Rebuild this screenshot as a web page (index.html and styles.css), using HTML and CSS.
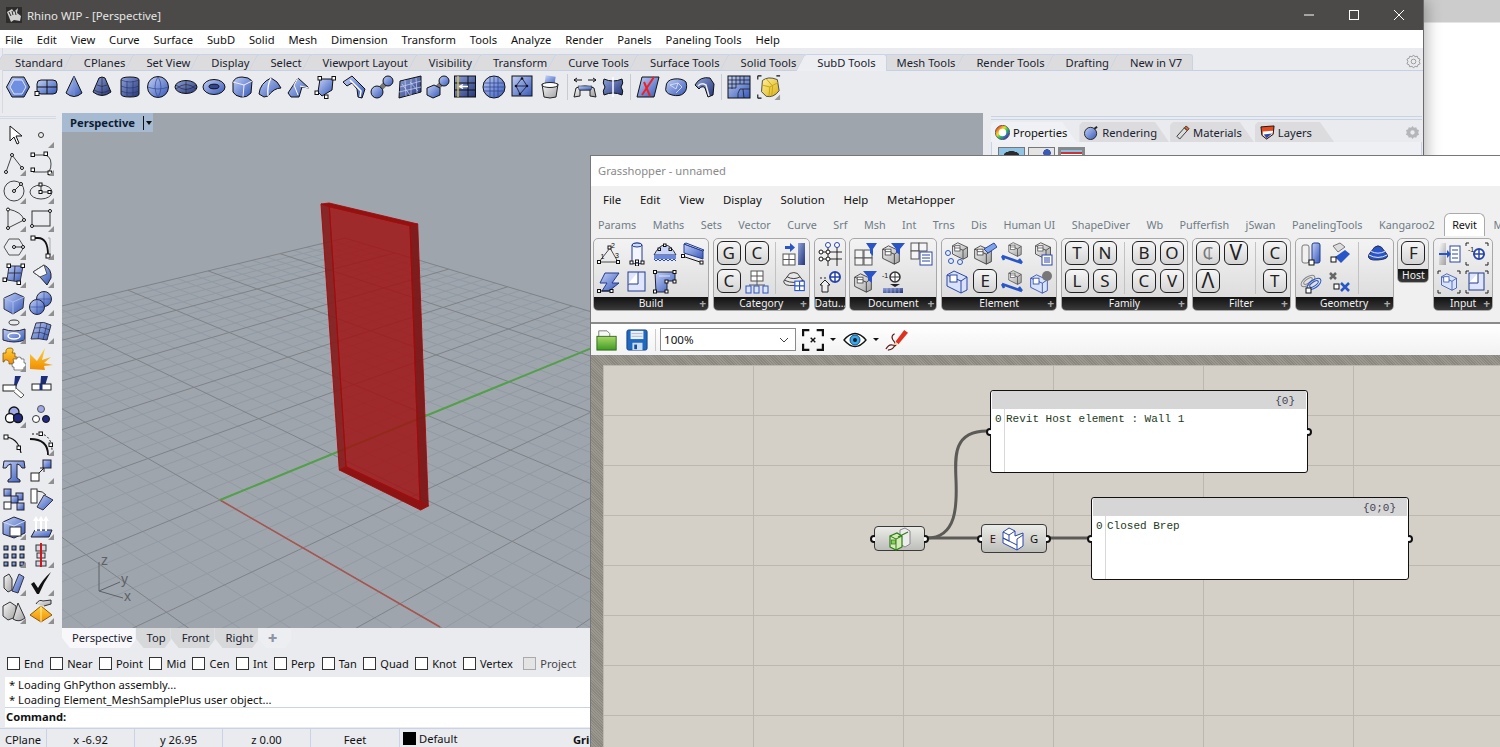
FILE: index.html
```html
<!DOCTYPE html>
<html lang="en">
<head>
    <meta charset="UTF-8">
    <title>Rhino WIP - [Perspective]</title>
    <link rel="stylesheet" href="styles.css">
</head>
<body>
    <svg class="defs" width="0" height="0">
        <defs>
            <linearGradient id="b" x1="0" y1="0" x2="1" y2="1"><stop offset="0" stop-color="#c3d0f7"/><stop offset="1" stop-color="#3558b8"/></linearGradient>
            <linearGradient id="d" x1="0" y1="0" x2="1" y2="1"><stop offset="0" stop-color="#8fa2da"/><stop offset="1" stop-color="#24357a"/></linearGradient>
            <linearGradient id="g" x1="0" y1="0" x2="1" y2="1"><stop offset="0" stop-color="#fafafa"/><stop offset="1" stop-color="#a0a0a0"/></linearGradient>
            <linearGradient id="o" x1="0" y1="0" x2="0" y2="1"><stop offset="0" stop-color="#ffd23c"/><stop offset="1" stop-color="#ef8c00"/></linearGradient>
            <linearGradient id="y" x1="0" y1="0" x2="1" y2="1"><stop offset="0" stop-color="#fff3a0"/><stop offset="1" stop-color="#d8b010"/></linearGradient>
            <linearGradient id="gr" x1="0" y1="0" x2="0" y2="1"><stop offset="0" stop-color="#a9d86a"/><stop offset="1" stop-color="#3f9a22"/></linearGradient>

            <!-- rhino main toolbar -->
            <symbol id="hex" viewBox="0 0 24 24"><path d="M6 2H18L23.5 12 18 22H6L.5 12Z" fill="url(#b)" stroke="#111"/><path d="M8 5H16L20 12 16 19H8L4 12Z" fill="#6f8fe0" stroke="#dfe6fb"/></symbol>
            <symbol id="plane" viewBox="0 0 24 24"><rect x="3" y="5" width="20" height="14" rx="4" fill="url(#b)" stroke="#111"/><path d="M3 12H23M13 5V19" stroke="#111" fill="none"/><rect x="1" y="16.500" width="4" height="4" fill="#fff" stroke="#111"/></symbol>
            <symbol id="cone" viewBox="0 0 24 24"><path d="M12 1 20 18Q12 25 4 18Z" fill="url(#b)" stroke="#111"/><path d="M12 1V21" stroke="#7890d8" fill="none"/></symbol>
            <symbol id="para" viewBox="0 0 24 24"><path d="M9 3Q12 1 15 3L21 17Q12 24 3 17Z" fill="url(#d)" stroke="#111"/><path d="M7 10Q12 13 17 10M4 15Q12 20 20 15M12 2V21" stroke="#222" fill="none" stroke-width=".6"/></symbol>
            <symbol id="cyl" viewBox="0 0 24 24"><path d="M3 5Q3 2 12 2T21 5V19Q21 22 12 22T3 19Z" fill="url(#d)" stroke="#111"/><path d="M3 5Q12 9 21 5M3 11Q12 15 21 11M3 16Q12 20 21 16M9 6V21M15 6V21" stroke="#23316a" fill="none" stroke-width=".6"/></symbol>
            <symbol id="sph" viewBox="0 0 24 24"><circle cx="12" cy="12" r="10.500" fill="url(#b)" stroke="#111"/><path d="M1.500 12Q12 16 22.500 12M12 1.500Q6 12 12 22.500Q18 12 12 1.500" stroke="#33498f" fill="none" stroke-width=".7"/></symbol>
            <symbol id="ell" viewBox="0 0 24 24"><ellipse cx="12" cy="12" rx="11" ry="6.500" fill="url(#d)" stroke="#111"/><path d="M2 10Q12 19 22 10M2 14Q12 5 22 14M12 6V18" stroke="#222" fill="none" stroke-width=".6"/></symbol>
            <symbol id="tor" viewBox="0 0 24 24"><ellipse cx="12" cy="12" rx="11" ry="7.500" fill="url(#b)" stroke="#111"/><ellipse cx="12" cy="11.500" rx="5" ry="2.300" fill="#33458d" stroke="#111"/></symbol>
            <symbol id="cub" viewBox="0 0 24 24"><path d="M3 7Q5 2 12 2T22 6L21 18Q17 23 11 22T3 17Z" fill="url(#b)" stroke="#111"/><path d="M3 7 14 10 22 6M14 10 13 22" stroke="#eef" fill="none"/></symbol>
            <symbol id="cor1" viewBox="0 0 24 24"><path d="M1 19Q2 8 13 3Q20 6 23 13Q16 13 10 21L6 22Z" fill="url(#b)" stroke="#111"/><path d="M13 3Q9 10 10 21" stroke="#fff" fill="none" stroke-width="1.300"/></symbol>
            <symbol id="cor2" viewBox="0 0 24 24"><path d="M2 18 12 3 23 13 16 12 13 22 5 22Z" fill="url(#b)" stroke="#111"/><path d="M12 3 8 10 12 20M23 13 14 11" stroke="#fff" fill="none"/></symbol>
            <symbol id="cor3" viewBox="0 0 24 24"><path d="M6 4H19L18 15 8 21 4 17Z" fill="url(#b)" stroke="#111"/><g fill="#fff" stroke="#111"><rect x="4" y="1.500" width="3.500" height="3.500"/><rect x="18" y="1.500" width="3.500" height="3.500"/><rect x="1" y="16" width="3.500" height="3.500"/><rect x="10.500" y="20" width="3.500" height="3.500"/></g></symbol>
            <symbol id="swp" viewBox="0 0 24 24"><path d="M1 7 10 1 23 14 20 23 16 22 15 14 10 8 5 11Z" fill="url(#b)" stroke="#111"/><path d="M8 5 19 16 18 22" stroke="#fff" fill="none" stroke-width="1.500"/></symbol>
            <symbol id="ball" viewBox="0 0 24 24"><path d="M8 16 16 8" stroke="#777" stroke-width="5"/><circle cx="18" cy="6" r="5" fill="url(#b)" stroke="#111"/><circle cx="7" cy="17" r="6" fill="url(#b)" stroke="#111"/></symbol>
            <symbol id="tile" viewBox="0 0 24 24"><path d="M2 6 23 1V17L1 23Z" fill="url(#d)" stroke="#111"/><path d="M7 5 8 21M13 4 13 20M18 3 19 18M2 12 23 6M1 17 23 12M4 9 12 20M12 7 20 16" stroke="#ccd6f4" fill="none" stroke-width=".7"/></symbol>
            <symbol id="boxb" viewBox="0 0 24 24"><path d="M9 15 16 8" stroke="#777" stroke-width="5"/><circle cx="18" cy="6" r="5" fill="url(#b)" stroke="#111"/><path d="M1 13 8 10 14 13V20L7 23 1 20Z" fill="url(#b)" stroke="#111"/></symbol>
            <symbol id="spl" viewBox="0 0 24 24"><rect x=".5" y="1" width="21" height="21" fill="url(#d)" stroke="#111"/><path d="M.5 8H21.500M.5 15H21.500M14 1V22" stroke="#111" fill="none"/><path d="M4 1V22" stroke="#f5d020" stroke-width="1.300"/><path d="M5 11.500H14M5 11.500 9 9.500M5 11.500 9 13.500" stroke="#fff" stroke-width="1.300" fill="none"/></symbol>
            <symbol id="gsph" viewBox="0 0 24 24"><circle cx="12" cy="12" r="11" fill="url(#b)" stroke="#111"/><path d="M1 8H23M1 12H23M1 16H23M8 1V23M12 1V23M16 1V23" stroke="#2b3f88" fill="none" stroke-width=".7"/></symbol>
            <symbol id="net" viewBox="0 0 24 24"><rect x="2" y="1" width="20" height="20" fill="url(#b)" stroke="#111"/><path d="M12 3 6 11 10 19M12 3 17 11 10 19M6 11H17" stroke="#112" fill="none" stroke-width=".8"/><g fill="#112"><circle cx="12" cy="3.500" r="1.300"/><circle cx="6" cy="11" r="1.300"/><circle cx="17" cy="11" r="1.300"/><circle cx="10" cy="19" r="1.300"/></g></symbol>
            <symbol id="buck" viewBox="0 0 24 24"><rect x="7" y="1" width="10" height="11" fill="url(#b)" transform="rotate(8 12 6)"/><path d="M4 9H20L18 22Q12 24 6 22Z" fill="url(#g)" stroke="#222"/><ellipse cx="12" cy="10" rx="8" ry="2.500" fill="#fff" stroke="#222"/></symbol>
            <symbol id="brg" viewBox="0 0 24 24"><path d="M1 5H9M1 5 4 3M1 5 4 7M23 5H15M23 5 20 3M23 5 20 7" stroke="#111" fill="none"/><path d="M3 13Q12 9 21 13L23 22 17 21 17 15H7L7 21 1 22Z" fill="url(#g)" stroke="#222"/><path d="M5 11H19L18 15H6Z" fill="url(#b)" stroke="#111" stroke-width=".5"/></symbol>
            <symbol id="pin" viewBox="0 0 24 24"><path d="M3 4Q12 8 21 4Q23 8 20 12Q23 16 21 20Q12 16 3 20Q1 16 4 12Q1 8 3 4Z" fill="url(#d)" stroke="#111"/><path d="M12 2V22" stroke="#fff" stroke-width="1.500"/></symbol>
            <symbol id="xs" viewBox="0 0 24 24"><path d="M6 2H23L18 22H1Z" fill="url(#b)" stroke="#111"/><path d="M6 20 18 2M8 7 14 21" stroke="#f02020" stroke-width="2" fill="none"/></symbol>
            <symbol id="pol" viewBox="0 0 24 24"><path d="M2 12Q2 5 10 4T22 7Q24 14 20 18T8 20 2 12Z" fill="url(#b)" stroke="#111"/><path d="M6 10 14 8 18 12 12 18M14 8 12 14 6 10" stroke="#dfe6fb" fill="none" stroke-width=".8"/></symbol>
            <symbol id="wrp" viewBox="0 0 24 24"><path d="M3 10Q8 1 18 3L22 9 21 20 16 22 13 13Q10 10 7 14Z" fill="url(#d)" stroke="#111"/><path d="M6 11Q9 7 14 10L17 21" stroke="#eee" fill="none" stroke-width="1.500"/></symbol>
            <symbol id="mgr" viewBox="0 0 24 24"><rect x="1" y="1" width="22" height="22" fill="url(#b)" stroke="#111"/><path d="M1 5H23M1 9H23M1 13H9M5 1V14M9 1V13M13 1V9M17 1V9M13 14Q10 18 11 23M16 14 23 14M16 14 17 23M13 14 16 14" stroke="#111" fill="none" stroke-width=".7"/></symbol>
            <symbol id="ycub" viewBox="0 0 28 28"><path d="M8 7Q14 2 24 6L26 18Q20 26 12 24L7 19Z" fill="url(#y)" stroke="#444"/><path d="M8 12 16 14 25 9M16 14 15 24M12 5 19 13 18 24" stroke="#c8a010" fill="none"/><path d="M2 2H6M2 2V6M26 2H22M2 26H6M2 26V22" stroke="#111" fill="none" stroke-width="1.200" transform="translate(1 0)"/><path d="M27 28H21L27 22Z" fill="#999"/></symbol>

            <!-- gears -->
            <symbol id="gear" viewBox="0 0 16 16"><path d="M8 1 9.500 3 12 2.300 12.700 4.500 15 5.500 14 8 15 10.500 12.700 11.500 12 13.700 9.500 13 8 15 6.500 13 4 13.700 3.300 11.500 1 10.500 2 8 1 5.500 3.300 4.500 4 2.300 6.500 3Z" fill="none" stroke="#999"/><circle cx="8" cy="8" r="2.500" fill="none" stroke="#999"/></symbol>
            <symbol id="gearf" viewBox="0 0 16 16"><path d="M8 1 9.500 3 12 2.300 12.700 4.500 15 5.500 14 8 15 10.500 12.700 11.500 12 13.700 9.500 13 8 15 6.500 13 4 13.700 3.300 11.500 1 10.500 2 8 1 5.500 3.300 4.500 4 2.300 6.500 3Z" fill="#b4b6b9"/><circle cx="8" cy="8" r="2.300" fill="#e9ebef"/></symbol>

            <!-- rhino side toolbar -->
            <symbol id="arr" viewBox="0 0 24 24"><path d="M8 3V18L12 14 15 21 17 20 14 13H20Z" fill="#fff" stroke="#111"/></symbol>
            <symbol id="pt" viewBox="0 0 24 24"><circle cx="12" cy="12" r="2.500" fill="#eee" stroke="#333"/></symbol>
            <symbol id="pl" viewBox="0 0 24 24"><path d="M4 21 10 4 20 17" fill="none" stroke="#444"/><g fill="#fff" stroke="#111"><circle cx="4" cy="21" r="1.500"/><circle cx="10" cy="4" r="1.500"/><circle cx="20" cy="17" r="1.500"/></g></symbol>
            <symbol id="cv" viewBox="0 0 24 24"><path d="M4 4H14Q22 4 22 13T16 21H4" fill="none" stroke="#444"/><g fill="#fff" stroke="#111"><rect x="2" y="2" width="3.500" height="3.500"/><rect x="15" y="1" width="3.500" height="3.500"/><rect x="2" y="17" width="3.500" height="3.500"/><rect x="19" y="20" width="3.500" height="3.500"/></g></symbol>
            <symbol id="cir" viewBox="0 0 24 24"><circle cx="12" cy="12" r="10" fill="none" stroke="#444"/><path d="M12 12 19 5" stroke="#333"/><circle cx="12" cy="12" r="1.500" fill="#fff" stroke="#111"/><circle cx="19" cy="5" r="1.500" fill="#fff" stroke="#111"/></symbol>
            <symbol id="elp" viewBox="0 0 24 24"><ellipse cx="12" cy="13" rx="11" ry="7" fill="none" stroke="#444"/><path d="M12 5V13H20" stroke="#333" fill="none"/><g fill="#fff" stroke="#111"><rect x="10" y="4" width="3" height="3"/><rect x="10" y="11.500" width="3" height="3"/><rect x="19" y="11.500" width="3" height="3"/></g></symbol>
            <symbol id="arc" viewBox="0 0 24 24"><path d="M6 2V21L22 13Q20 5 6 2" fill="none" stroke="#444"/><g fill="#fff" stroke="#111"><circle cx="6" cy="2.500" r="1.500"/><circle cx="6" cy="21" r="1.500"/><circle cx="22" cy="13" r="1.500"/></g></symbol>
            <symbol id="rct" viewBox="0 0 24 24"><rect x="3" y="4" width="18" height="15" fill="none" stroke="#333"/><circle cx="21" cy="4" r="1.500" fill="#fff" stroke="#111"/><circle cx="3" cy="19" r="1.500" fill="#fff" stroke="#111"/></symbol>
            <symbol id="pg" viewBox="0 0 24 24"><path d="M7 4H17L22 12 17 20H7L2 12Z" fill="none" stroke="#555"/><path d="M12 12H22" stroke="#333"/><circle cx="12" cy="12" r="1.500" fill="#fff" stroke="#111"/><circle cx="21" cy="12" r="1.500" fill="#fff" stroke="#111"/></symbol>
            <symbol id="fil" viewBox="0 0 24 24"><path d="M19 3H21V20" fill="none" stroke="#aaa"/><path d="M4 3H9Q19 3 19 20" fill="none" stroke="#111" stroke-width="1.800"/><rect x="2" y="1" width="4" height="4" fill="#fff" stroke="#111"/><rect x="17" y="19" width="4" height="4" fill="#fff" stroke="#111"/></symbol>
            <symbol id="srf" viewBox="0 0 24 24"><path d="M7 3H21L18 19 5 17Z" fill="url(#b)" stroke="#334"/><path d="M6 10H19M13 3 12 18" stroke="#334" fill="none"/><g fill="#fff" stroke="#111"><rect x="5" y="1" width="3.500" height="3.500"/><rect x="19" y="1" width="3.500" height="3.500"/><rect x="1" y="15" width="3.500" height="3.500"/><rect x="15" y="18" width="3.500" height="3.500"/></g></symbol>
            <symbol id="swp2" viewBox="0 0 24 24"><path d="M4 9 15 2Q23 6 22 15L18 22 11 14Z" fill="url(#b)" stroke="#222"/><path d="M4 9 15 2 18 11 11 14Z" fill="#f5f6fa" stroke="#555"/></symbol>
            <symbol id="bx" viewBox="0 0 24 24"><path d="M2 7 13 2 22 6 21 17 11 23 2 18Z" fill="url(#b)" stroke="#334"/><path d="M2 7 11 11 22 6M11 11V23" stroke="#a8baee" fill="none"/></symbol>
            <symbol id="sps" viewBox="0 0 24 24"><g fill="url(#b)" stroke="#223"><circle cx="15" cy="8" r="7.500"/><circle cx="8" cy="16" r="7.500"/></g><path d="M7.500 8H22.500M15 .5V15M.5 16H15M8 8.500V23" stroke="#334a98" fill="none" stroke-width=".6"/></symbol>
            <symbol id="ring" viewBox="0 0 24 24"><ellipse cx="12" cy="3.500" rx="5" ry="2.500" fill="none" stroke="#333"/><path d="M1 10Q12 14 23 10V21Q12 25 1 21Z" fill="url(#b)" stroke="#223"/><ellipse cx="12" cy="17" rx="6" ry="3" fill="none" stroke="#fff" stroke-width="1.500"/></symbol>
            <symbol id="ms" viewBox="0 0 24 24"><path d="M7 4Q15 2 22 6L18 21Q10 19 2 20Z" fill="url(#b)" stroke="#334"/><path d="M6 9Q14 7 21 11M4 14Q12 12 19 16M12 3 9 20M18 5 14 21" stroke="#223" fill="none" stroke-width=".6"/></symbol>
            <symbol id="puz" viewBox="0 0 24 24"><path d="M2 8H5Q4 3 9 3T11 8H14V12Q17 11 17 15T14 17V19H8Q9 16 6 15T3 17H2Z" fill="url(#o)" stroke="#7a4a00" stroke-width=".7" transform="translate(-1 -2)"/><path d="M11 12H15Q14 10 17 10T19 12H22V16Q24 15 24 18T22 20V23H12V20Q10 21 10 18T12 16Z" fill="#fff" stroke="#555" stroke-width=".7"/></symbol>
            <symbol id="exp" viewBox="0 0 24 24"><path d="M1 22V7L8 14 16 1 13 13 22 10 15 16 24 18 15 19 16 23Z" fill="url(#o)"/></symbol>
            <symbol id="trm" viewBox="0 0 24 24"><path d="M13 1H19L14 12 12 11Z" fill="#1c2e7a"/><rect x="2" y="7" width="13" height="6" fill="#fff" stroke="#222" transform="translate(-1 3)"/><path d="M14 13 22 20 19 23 12 17" fill="#fff" stroke="#555"/></symbol>
            <symbol id="spt" viewBox="0 0 24 24"><path d="M12 1H19L15 14H11Z" fill="#1c2e7a"/><rect x="3" y="9" width="19" height="6" fill="#fff" stroke="#222"/><path d="M12 9V15" stroke="#1c2e7a" stroke-width="3"/></symbol>
            <symbol id="bln" viewBox="0 0 24 24"><g stroke="#111" stroke-width="1.300"><circle cx="12" cy="9" r="5" fill="#9fa9e8"/><circle cx="8" cy="15" r="4.500" fill="#fff"/><circle cx="16" cy="15" r="4.500" fill="#1f2a80"/></g></symbol>
            <symbol id="grp" viewBox="0 0 24 24"><circle cx="12" cy="6" r="3.500" fill="#9fa9e8" stroke="#555"/><circle cx="7" cy="16" r="3.500" fill="#fff" stroke="#333"/><circle cx="17" cy="16" r="3.500" fill="#1f2a80" stroke="#111"/></symbol>
            <symbol id="fl1" viewBox="0 0 24 24"><path d="M2 6Q16 6 19 22" fill="none" stroke="#111" stroke-width="1.200"/><rect x="2" y="4" width="4" height="4" fill="#fff" stroke="#111"/><rect x="15" y="15" width="3.500" height="3.500" fill="#fff" stroke="#111"/></symbol>
            <symbol id="off" viewBox="0 0 24 24"><path d="M1 8Q19 8 19 24" fill="none" stroke="#111" stroke-width="1.800"/><path d="M3 3H13Q23 6 23 20" fill="none" stroke="#111" stroke-dasharray="2 2"/><rect x="10" y="1" width="3.500" height="3.500" fill="#fff" stroke="#111"/><rect x="20" y="12" width="3.500" height="3.500" fill="#fff" stroke="#111"/></symbol>
            <symbol id="tt" viewBox="0 0 24 24"><path d="M2 2H22L23 9H20Q18 5 15 5L15 19 18 21V23H6V21L9 19V5Q6 5 4 9H1Z" fill="url(#b)" stroke="#223"/></symbol>
            <symbol id="mv" viewBox="0 0 24 24"><rect x="14" y="1" width="8" height="8" fill="url(#b)" stroke="#223"/><rect x="2" y="14" width="8" height="8" fill="#fff" stroke="#222"/><path d="M10 14 15 9M11 9H15V13" stroke="#222" fill="none"/></symbol>
            <symbol id="blk" viewBox="0 0 24 24"><g stroke="#223"><rect x="2" y="2" width="7" height="7" fill="url(#b)"/><rect x="14" y="6" width="7" height="7" fill="url(#b)"/><rect x="9" y="9" width="7" height="7" fill="url(#b)"/><rect x="2" y="15" width="7" height="7" fill="#fff"/><rect x="15" y="16" width="7" height="7" fill="url(#b)"/></g></symbol>
            <symbol id="rot" viewBox="0 0 24 24"><rect x="2" y="2" width="6" height="14" fill="#fff" stroke="#333"/><path d="M8 4Q14 4 17 8" fill="none" stroke="#333"/><path d="M15 8 24 13 14 23 8 20Z" fill="url(#b)" stroke="#334"/></symbol>
            <symbol id="hol" viewBox="0 0 24 24"><path d="M1 7 12 2 23 6V18L12 23 1 19Z" fill="url(#b)" stroke="#223"/><rect x="8" y="12" width="11" height="9" fill="#fff" stroke="#333"/><path d="M1 7 12 11 23 6" stroke="#cdd8f7" fill="none"/></symbol>
            <symbol id="upa" viewBox="0 0 24 24"><path d="M2 22 6 15H23L20 22Z" fill="url(#b)" stroke="#223"/><path d="M7 16V4M12 16V4M17 16V4" stroke="#fff" stroke-width="2"/><path d="M4 6 7 1 10 6M9 6 12 1 15 6M14 6 17 1 20 6" fill="#fff"/></symbol>
            <symbol id="dots" viewBox="0 0 24 24"><g fill="url(#b)" stroke="#111"><rect x="2" y="3" width="4" height="4"/><rect x="10" y="3" width="4" height="4"/><rect x="18" y="3" width="4" height="4"/><rect x="2" y="11" width="4" height="4"/><rect x="10" y="11" width="4" height="4"/><rect x="18" y="11" width="4" height="4"/><rect x="2" y="19" width="4" height="4"/><rect x="10" y="19" width="4" height="4"/><rect x="18" y="19" width="4" height="4"/></g></symbol>
            <symbol id="mir" viewBox="0 0 24 24"><g fill="#d4d8e6" stroke="#333"><rect x="7" y="2" width="10" height="6"/><rect x="8" y="10" width="8" height="5"/><rect x="7" y="18" width="10" height="5"/></g><path d="M12 0V24" stroke="#d01818" stroke-width="2"/></symbol>
            <symbol id="shl" viewBox="0 0 24 24"><path d="M2 6 7 3 10 8V19L6 21 2 17Z" fill="url(#g)" stroke="#333"/><path d="M10 20 17 3 22 6 16 22Z" fill="url(#b)" stroke="#334"/></symbol>
            <symbol id="chk" viewBox="0 0 24 24"><path d="M2 13 5 11 9 17Q14 8 22 1Q15 11 10 23H8Z" fill="#111"/></symbol>
            <symbol id="shp" viewBox="0 0 24 24"><path d="M1 7 8 3 14 7 14 18 6 21 1 17Z" fill="url(#g)" stroke="#333"/><path d="M16 4 23 19Q17 24 11 20Z" fill="url(#g)" stroke="#333"/></symbol>
            <symbol id="pyr" viewBox="0 0 24 24"><path d="M12 7 23 16 12 23 1 16Z" fill="url(#o)" stroke="#8a5a10"/><path d="M12 7V23" stroke="#fff0a0"/><path d="M7 5Q10 0 14 2L22 1V5L15 7" fill="url(#g)" stroke="#333"/></symbol>

            <!-- rhino panel tabs -->
            <symbol id="wheel" viewBox="0 0 14 14"><circle cx="7" cy="7" r="5" fill="#fff" stroke="url(#rb)" stroke-width="3"/><circle cx="7" cy="7" r="6.700" fill="none" stroke="#222" stroke-width=".6"/></symbol>
            <linearGradient id="rb" x1="0" y1="0" x2="1" y2="1"><stop offset="0" stop-color="#f03030"/><stop offset=".35" stop-color="#f0e020"/><stop offset=".6" stop-color="#20c060"/><stop offset="1" stop-color="#5020e0"/></linearGradient>
            <symbol id="rball" viewBox="0 0 16 16"><circle cx="7" cy="9" r="6.500" fill="url(#b)" stroke="#222"/><path d="M11 4 14 2" stroke="#222" stroke-width="2"/></symbol>
            <symbol id="tube" viewBox="0 0 16 16"><path d="M2 12 10 3 13 6 5 15Z" fill="#ddd" stroke="#333"/><path d="M10 3 12 1 15 4 13 6Z" fill="#e8601c" stroke="#333"/></symbol>
            <symbol id="lay" viewBox="0 0 16 16"><path d="M1 2 15 1 14 10 7 15 2 11Z" fill="#e8481c" stroke="#111"/><path d="M3 7 14 6 13 10 7 14 3 11Z" fill="#fff"/><path d="M4 10 13 9 7 14Z" fill="#2a4aa8"/></symbol>

            <!-- grasshopper ribbon -->
            <symbol id="g-tri" viewBox="0 0 24 24"><path d="M2 20 13 6 21 20Z" fill="none" stroke="#222" stroke-width=".8"/><g fill="#fff" stroke="#111"><rect x=".5" y="18.500" width="3" height="3"/><rect x="11" y="4" width="3" height="3"/><rect x="19.500" y="18.500" width="3" height="3"/></g><text x="14" y="6" class="gt">2</text><text x="3.500" y="17" class="gt">1</text><text x="18" y="16" class="gt">3</text></symbol>
            <symbol id="g-col" viewBox="0 0 24 24"><path d="M7 3Q7 1 12 1T17 3V20Q17 22 12 22T7 20Z" fill="#f4f6ff" stroke="#223a90"/><ellipse cx="12" cy="3" rx="5" ry="2" fill="#cfdaf8" stroke="#223a90"/><g fill="#fff" stroke="#111"><rect x="5" y="19" width="3" height="3"/><rect x="10.500" y="18" width="3" height="3"/><rect x="16" y="19" width="3" height="3"/><rect x="10.500" y="21" width="3" height="3"/></g></symbol>
            <symbol id="g-dome" viewBox="0 0 24 24"><path d="M1 13Q6 3 12 3T23 13Z" fill="#c9d6f7" stroke="#334"/><path d="M1 13H23V17H1Z" fill="#6a88df"/><path d="M1 17 3 19 5 17 7 19 9 17 11 19 13 17 15 19 17 17 19 19 21 17 23 19" fill="none" stroke="#2a4aa8"/><g fill="#fff" stroke="#111"><rect x="5" y="6" width="2.500" height="2.500"/><rect x="16" y="6" width="2.500" height="2.500"/><rect x="10.500" y="2" width="2.500" height="2.500"/></g></symbol>
            <symbol id="g-wallb" viewBox="0 0 24 24"><path d="M3 2 22 9V17L3 11Z" fill="url(#b)" stroke="#223a90"/><path d="M3 2 5 1 23 8 22 9Z" fill="#dfe6fb" stroke="#223a90"/><path d="M1 14 19 20" stroke="#111"/><rect x=".5" y="12.500" width="3" height="3" fill="#fff" stroke="#111"/><rect x="19" y="19" width="3" height="3" fill="#fff" stroke="#111"/></symbol>
            <symbol id="g-str" viewBox="0 0 24 24"><path d="M8 3H22L15 13H22L12 21H5L10 13H3Z" fill="url(#b)" stroke="#223a90"/><path d="M2 21H14" stroke="#111"/><rect x=".5" y="19.500" width="3" height="3" fill="#fff" stroke="#111"/><rect x="13" y="19.500" width="3" height="3" fill="#fff" stroke="#111"/></symbol>
            <symbol id="g-sq" viewBox="0 0 24 24"><rect x="3" y="2" width="17" height="19" fill="#dfe6fb" stroke="#223a90"/><path d="M3 14H13V2" fill="#fff" stroke="#223a90"/></symbol>
            <symbol id="g-rm" viewBox="0 0 24 24"><path d="M2 2H22V11H14V22H3Z" fill="url(#b)" stroke="#223"/><path d="M6 6H17" stroke="#dfe6fb"/><g fill="#fff" stroke="#111"><rect x=".5" y=".5" width="3" height="3"/><rect x="20" y=".5" width="3" height="3"/><rect x="20" y="10" width="3" height="3"/><rect x="12" y="10" width="3" height="3"/><rect x=".5" y="20" width="3" height="3"/><rect x="12" y="20" width="3" height="3"/></g></symbol>
            <symbol id="g-bar" viewBox="0 0 24 24"><rect x="16" y="1" width="7" height="22" fill="url(#d)"/><path d="M3 4H8V1L13 5.500 8 10V7H3Z" fill="#2a55c8"/><rect x="1" y="12" width="12" height="11" fill="#fff" stroke="#555"/><path d="M1 17.500H13M7 12V23" stroke="#555"/></symbol>
            <symbol id="g-tree" viewBox="0 0 24 24"><rect x="6" y="1" width="12" height="10" fill="#fff" stroke="#555"/><path d="M6 6H18M12 1V11M12 11V15M4 15H20" stroke="#555" fill="none"/><g fill="#dfe6fb" stroke="#2a55c8"><rect x="1" y="16" width="5" height="7"/><rect x="9" y="16" width="5" height="7"/><rect x="18" y="16" width="5" height="7"/></g></symbol>
            <symbol id="g-cone" viewBox="0 0 28 24"><path d="M9 2Q14 0 18 2L25 11Q26 15 14 16T2 11Z" fill="#e8e8e8" stroke="#222"/><path d="M6 6Q14 10 21 6M3 10Q14 15 25 10" stroke="#222" fill="none"/><rect x="15" y="11" width="11" height="11" fill="#fff" stroke="#2a55c8" stroke-width="1.300"/><path d="M15 16.500H26M20.500 11V22" stroke="#2a55c8" stroke-width="1.300"/></symbol>
            <symbol id="g-dat" viewBox="0 0 24 24"><path d="M1 10H24M1 17H24M10 1V24M19 1V24" stroke="#111" fill="none" stroke-width=".9"/><g fill="#fff" stroke="#2a45a8"><circle cx="10" cy="3" r="2.500"/><circle cx="19" cy="3" r="2.500"/></g><g fill="#fff" stroke="#111"><circle cx="3" cy="10" r="2"/><circle cx="3" cy="17" r="2"/><circle cx="10" cy="10" r="2"/><circle cx="10" cy="17" r="2"/></g></symbol>
            <symbol id="g-lev" viewBox="0 0 24 24"><circle cx="17" cy="7" r="5" fill="#fff" stroke="#2a45a8" stroke-width="2"/><path d="M17 2V12M12 7H22" stroke="#2a45a8" stroke-width="1.500"/><path d="M2 8H10" stroke="#222" stroke-dasharray="2 2"/><path d="M2 15 7 10 12 15H10V22H4V15Z" fill="#eee" stroke="#222"/></symbol>
            <symbol id="g-fgrid" viewBox="0 0 24 24"><g fill="#f5f5f5" stroke="#555"><rect x="2" y="8" width="8" height="8"/><rect x="11" y="8" width="8" height="8"/><rect x="2" y="16" width="8" height="7"/><rect x="11" y="16" width="8" height="7"/></g><path d="M13 1H24L20 7V14L17 11V7Z" fill="#2a55c8"/></symbol>
            <symbol id="g-box" viewBox="0 0 24 24"><path d="M2 5 9 1 22 7V20L16 23 2 16Z" fill="url(#g)" stroke="#333"/><path d="M2 5 16 11V23M16 11 22 7" stroke="#333" fill="none"/><rect x="5" y="5" width="7" height="7" fill="#fff" stroke="#444"/><path d="M5 8H12" stroke="#444"/></symbol>
            <symbol id="g-fbox" viewBox="0 0 24 24"><use href="#g-box" width="20" height="22" y="2"/><path d="M10 1H24L19 7V13L15 10V7Z" fill="#2a55c8"/></symbol>
            <symbol id="g-doc" viewBox="0 0 24 24"><g fill="#f5f5f5" stroke="#555"><rect x="2" y="1" width="8" height="8"/><rect x="10" y="1" width="8" height="8"/><rect x="2" y="9" width="8" height="8"/></g><rect x="11" y="10" width="12" height="13" fill="#fff" stroke="#2a45a8"/><path d="M13 13H21M13 16H21M13 19H21" stroke="#2a45a8"/></symbol>
            <symbol id="g-flvl" viewBox="0 0 24 24"><circle cx="14" cy="7" r="5" fill="#fff" stroke="#333" stroke-width="1.500"/><path d="M14 2V12M9 7H19" stroke="#333"/><text x="1" y="8" class="gt">-1</text><path d="M9 14H19L14 17Z" fill="#222"/><rect x="2" y="18" width="20" height="5" fill="url(#d)"/><path d="M6 18V23M10 18V23M14 18V23M18 18V23" stroke="#b8c6ee" stroke-width=".6"/></symbol>
            <symbol id="g-el" viewBox="0 0 24 24"><use href="#g-box" x="6" width="18" height="18"/><g fill="none" stroke="#2a55c8"><circle cx="3" cy="11" r="2.500"/><circle cx="6" cy="19" r="2.500"/><circle cx="15" cy="20" r="2.500"/></g></symbol>
            <symbol id="g-tag" viewBox="0 0 24 24"><use href="#g-box" width="20" height="22" y="2"/><path d="M11 7 21 1 24 5 15 11Z" fill="#7fa3e8" stroke="#2a45a8"/></symbol>
            <symbol id="g-arr" viewBox="0 0 24 24"><use href="#g-box" x="5" width="18" height="15"/><path d="M1 14 21 21M1 14 3 18M21 21 18 17" stroke="#2a55c8" stroke-width="2.500" fill="none"/></symbol>
            <symbol id="g-eld" viewBox="0 0 24 24"><use href="#g-box" x="4" width="20" height="18"/><rect x="13" y="13" width="10" height="10" fill="#fff" stroke="#2a45a8"/><path d="M15 16H21M15 18H21M15 20H21" stroke="#2a45a8"/></symbol>
            <symbol id="g-bbox" viewBox="0 0 24 24"><path d="M2 5 9 1 22 7V20L16 23 2 16Z" fill="#d8e2fb" stroke="#2a45a8"/><path d="M2 5 16 11V23M16 11 22 7" stroke="#2a45a8" fill="none"/><rect x="5" y="5" width="7" height="7" fill="#fff" stroke="#2a45a8"/></symbol>
            <symbol id="g-elsp" viewBox="0 0 24 24"><use href="#g-bbox" y="4" width="20" height="20"/><circle cx="18" cy="6" r="5" fill="#777"/></symbol>
            <symbol id="g-pl2" viewBox="0 0 24 24"><rect x="3" y="3" width="7" height="18" rx="2" fill="#f0f0f0" stroke="#777"/><rect x="13" y="1" width="8" height="20" rx="2" fill="url(#b)" stroke="#223a90"/><rect x="10" y="18" width="5" height="5" fill="#fff" stroke="#111"/></symbol>
            <symbol id="g-ln" viewBox="0 0 24 24"><path d="M6 4 13 1 18 5 11 10Z" fill="#ddd" stroke="#777"/><path d="M8 15 18 8 23 12 14 21Z" fill="#2a55c8"/><rect x="4" y="15" width="5" height="5" fill="#fff" stroke="#111"/></symbol>
            <symbol id="g-sw" viewBox="0 0 24 24"><g fill="none" stroke="#888"><ellipse cx="9" cy="11" rx="8" ry="4" transform="rotate(-35 9 11)"/><ellipse cx="9" cy="11" rx="5" ry="2" transform="rotate(-35 9 11)"/></g><g fill="none" stroke="#2a55c8"><ellipse cx="15" cy="14" rx="8" ry="4" transform="rotate(-35 15 14)"/><ellipse cx="15" cy="14" rx="5" ry="2" transform="rotate(-35 15 14)"/></g><rect x="7" y="18" width="5" height="5" fill="#fff" stroke="#111"/></symbol>
            <symbol id="g-xx" viewBox="0 0 24 24"><path d="M3 3 9 9M9 3 3 9" stroke="#666" stroke-width="2.500"/><path d="M14 13 22 21M22 13 14 21" stroke="#2a55c8" stroke-width="2.500"/><rect x="7" y="14" width="5" height="5" fill="#fff" stroke="#111"/></symbol>
            <symbol id="g-cblue" viewBox="0 0 28 24"><path d="M10 4Q14 1 18 4L25 13Q27 18 14 19T3 13Z" fill="#2a55c8" stroke="#223"/><path d="M6 9Q14 13 22 9M3 13Q14 19 25 13" stroke="#fff" fill="none"/></symbol>
            <symbol id="g-in1" viewBox="0 0 24 24"><rect x="2" y="1" width="7" height="22" fill="url(#g)"/><rect x="13" y="4" width="10" height="16" fill="#fff" stroke="#2a45a8"/><path d="M15 8H21M15 12H21M15 16H21" stroke="#2a45a8"/><path d="M2 11H10V8L14 12 10 16V13H2Z" fill="#2a55c8"/></symbol>
            <symbol id="g-in2" viewBox="0 0 24 24"><path d="M1 4V1H4M23 4V1H20M1 20V23H4M23 20V23H20" fill="none" stroke="#222"/><circle cx="14" cy="12" r="5" fill="#fff" stroke="#2a45a8" stroke-width="2"/><path d="M14 7V17M9 12H19" stroke="#2a45a8" stroke-width="1.500"/><text x="3" y="10" class="gt">-1</text></symbol>
            <symbol id="g-in3" viewBox="0 0 24 24"><path d="M1 4V1H4M23 4V1H20M1 20V23H4M23 20V23H20" fill="none" stroke="#222"/><use href="#g-bbox" x="3" y="3" width="18" height="18"/></symbol>
            <symbol id="g-in4" viewBox="0 0 24 24"><path d="M1 4V1H4M23 4V1H20M1 20V23H4M23 20V23H20" fill="none" stroke="#222"/><rect x="4" y="3" width="15" height="17" fill="#dfe6fb" stroke="#223a90"/><path d="M4 13H13V3" fill="#fff" stroke="#223a90"/></symbol>

            <!-- grasshopper toolbar -->
            <symbol id="folder" viewBox="0 0 24 24"><path d="M3 2H12L15 5V10H3Z" fill="#f7f7f7" stroke="#777"/><rect x="1" y="8" width="21" height="15" fill="url(#gr)" stroke="#2f6b18"/></symbol>
            <symbol id="disk" viewBox="0 0 24 24"><path d="M1 3Q1 1 3 1H21Q23 1 23 3V21Q23 23 21 23H3Q1 23 1 21Z" fill="#2067c0" stroke="#14407e"/><rect x="5" y="2" width="14" height="9" fill="#e8f0fa"/><path d="M6 5H18M6 8H18" stroke="#b0b8c4"/><rect x="7" y="15" width="11" height="8" fill="#c8dcf4"/><rect x="9" y="17" width="3" height="5" fill="#1a4c96"/></symbol>
            <symbol id="fit" viewBox="0 0 24 24"><path d="M1 8V1H8M16 1H23V8M1 16V23H8M23 16V23H16" fill="none" stroke="#111" stroke-width="2.800"/><path d="M9.500 9.500 14.500 14.500M14.500 9.500 9.500 14.500" stroke="#111" stroke-width="1.500"/></symbol>
            <symbol id="eye" viewBox="0 0 24 16"><path d="M1 8Q12 -5 23 8Q12 21 1 8Z" fill="#fff" stroke="#111" stroke-width="1.300"/><circle cx="12" cy="8" r="5" fill="#3aa8e8" stroke="#124a80"/><circle cx="12" cy="8" r="2" fill="#0a2030"/></symbol>
            <symbol id="pen" viewBox="0 0 24 24"><path d="M1 22Q4 16 9 18T8 12Q6 8 10 6" fill="none" stroke="#5a1a1a" stroke-width="1.300"/><path d="M3 23Q9 23 12 15" fill="none" stroke="#5a1a1a" stroke-width="1.300"/><path d="M11 14 20 2 24 5 14 17Z" fill="#e03020"/><path d="M11 14 14 17 10 18Z" fill="#f0d8a0"/></symbol>

            <!-- grasshopper components -->
            <symbol id="c-host" viewBox="0 0 24 24"><path d="M12 3 17 1 22 4V17L17 20 12 17Z" fill="#ececec" stroke="#888"/><path d="M2 9 9 6 14 9V20L8 23 2 20Z" fill="#d4edb8" stroke="#2e7a18" stroke-width="1.200"/><path d="M2 9 8 12V23M8 12 14 9" fill="none" stroke="#2e7a18"/><rect x="3.500" y="13" width="4" height="4" fill="#8fce5a" stroke="#2e7a18" stroke-width=".7"/><path d="M10 10 20 5" stroke="#2e7a18" stroke-width="1.200"/></symbol>
            <symbol id="c-geo" viewBox="0 0 24 24"><path d="M2 5 8 1 14 4V9L22 6V19L16 23 2 16Z" fill="#fff" stroke="#2a45a8"/><path d="M2 5 8 8V14L2 11M8 8 14 4M16 12V23M16 12 22 8M2 11 16 18" fill="none" stroke="#2a45a8"/></symbol>
        </defs>
    </svg>

    <div class="bg-win"></div>

    <div class="rhino">
        <div class="title-bar">
            <svg class="rh-logo" viewBox="0 0 16 16"><rect width="16" height="16" fill="#2d2c2b"/><path d="M1 5 6 2 8 5 12 1 11 6 15 9 14 14 8 13 5 15 3 10Z" fill="#cfcfcf"/><path d="M3 5 5 9M6 4 7 8M9 4 10 8" stroke="#2d2c2b"/></svg>
            <span class="title-text">Rhino WIP - [Perspective]</span>
            <div class="win-btns">
                <svg viewBox="0 0 10 10"><path d="M0 5H10" stroke="#fff"/></svg>
                <svg viewBox="0 0 10 10"><rect x=".5" y=".5" width="9" height="9" fill="none" stroke="#fff"/></svg>
                <svg viewBox="0 0 10 10"><path d="M0 0 10 10M10 0 0 10" stroke="#fff"/></svg>
            </div>
        </div>

        <div class="menu">
            <span>File</span><span>Edit</span><span>View</span><span>Curve</span><span>Surface</span><span>SubD</span><span>Solid</span><span>Mesh</span><span>Dimension</span><span>Transform</span><span>Tools</span><span>Analyze</span><span>Render</span><span>Panels</span><span>Paneling Tools</span><span>Help</span>
        </div>

        <div class="toolbar">
            <div class="tb-tabs">
                <span class="tb-tab">Standard</span><span class="tb-tab">CPlanes</span><span class="tb-tab">Set View</span><span class="tb-tab">Display</span><span class="tb-tab">Select</span><span class="tb-tab">Viewport Layout</span><span class="tb-tab">Visibility</span><span class="tb-tab">Transform</span><span class="tb-tab">Curve Tools</span><span class="tb-tab">Surface Tools</span><span class="tb-tab">Solid Tools</span><span class="tb-tab active">SubD Tools</span><span class="tb-tab">Mesh Tools</span><span class="tb-tab">Render Tools</span><span class="tb-tab">Drafting</span><span class="tb-tab">New in V7</span>
                <svg class="gear"><use href="#gear"/></svg>
            </div>
            <div class="tb-icons">
                <svg><use href="#hex"/></svg><svg><use href="#plane"/></svg><svg><use href="#cone"/></svg><svg><use href="#para"/></svg><svg><use href="#cyl"/></svg><svg><use href="#sph"/></svg><svg><use href="#ell"/></svg><svg><use href="#tor"/></svg><svg><use href="#cub"/></svg><svg><use href="#cor1"/></svg><svg><use href="#cor2"/></svg><svg><use href="#cor3"/></svg><svg><use href="#swp"/></svg><svg><use href="#ball"/></svg><svg><use href="#tile"/></svg><svg><use href="#boxb"/></svg><svg><use href="#spl"/></svg><svg><use href="#gsph"/></svg><svg><use href="#net"/></svg><svg><use href="#buck"/></svg>
                <i class="tb-sep"></i>
                <svg><use href="#brg"/></svg><svg><use href="#pin"/></svg>
                <i class="tb-sep"></i>
                <svg><use href="#xs"/></svg><svg><use href="#pol"/></svg><svg><use href="#wrp"/></svg>
                <i class="tb-sep"></i>
                <svg><use href="#mgr"/></svg><svg class="big"><use href="#ycub"/></svg>
            </div>
        </div>

        <div class="rh-main">
            <div class="side-tools">
                <span class="cell"><svg><use href="#arr"/></svg></span><span class="cell more"><svg><use href="#pt"/></svg></span>
                <span class="cell more"><svg><use href="#pl"/></svg></span><span class="cell more"><svg><use href="#cv"/></svg></span>
                <span class="cell more"><svg><use href="#cir"/></svg></span><span class="cell more"><svg><use href="#elp"/></svg></span>
                <span class="cell more"><svg><use href="#arc"/></svg></span><span class="cell more"><svg><use href="#rct"/></svg></span>
                <span class="cell more"><svg><use href="#pg"/></svg></span><span class="cell more"><svg><use href="#fil"/></svg></span>
                <span class="cell more"><svg><use href="#srf"/></svg></span><span class="cell more"><svg><use href="#swp2"/></svg></span>
                <span class="cell more"><svg><use href="#bx"/></svg></span><span class="cell more"><svg><use href="#sps"/></svg></span>
                <span class="cell more"><svg><use href="#ring"/></svg></span><span class="cell more"><svg><use href="#ms"/></svg></span>
                <span class="cell more"><svg><use href="#puz"/></svg></span><span class="cell"><svg><use href="#exp"/></svg></span>
                <span class="cell"><svg><use href="#trm"/></svg></span><span class="cell"><svg><use href="#spt"/></svg></span>
                <span class="cell more"><svg><use href="#bln"/></svg></span><span class="cell"><svg><use href="#grp"/></svg></span>
                <span class="cell"><svg><use href="#fl1"/></svg></span><span class="cell more"><svg><use href="#off"/></svg></span>
                <span class="cell"><svg><use href="#tt"/></svg></span><span class="cell more"><svg><use href="#mv"/></svg></span>
                <span class="cell"><svg><use href="#blk"/></svg></span><span class="cell"><svg><use href="#rot"/></svg></span>
                <span class="cell more"><svg><use href="#hol"/></svg></span><span class="cell more"><svg><use href="#upa"/></svg></span>
                <span class="cell more"><svg><use href="#dots"/></svg></span><span class="cell more"><svg><use href="#mir"/></svg></span>
                <span class="cell more"><svg><use href="#shl"/></svg></span><span class="cell more"><svg><use href="#chk"/></svg></span>
                <span class="cell more"><svg><use href="#shp"/></svg></span><span class="cell more"><svg><use href="#pyr"/></svg></span>
            </div>

            <div class="viewport">
                <div class="vp-label"><span>Perspective</span><i></i><b></b></div>
                <svg class="scene" viewBox="62 113 921 515">
                    <g id="grid"></g>
                    <path d="M220 500 440 627" stroke="#a8544f" stroke-width="1.500" fill="none"/>
                    <path d="M220 500 983 188" stroke="#52a048" stroke-width="2" fill="none"/>
                    <g stroke="#a80808" stroke-width=".9" stroke-linejoin="round">
                        <path d="M329.300 206.700 410 225.700 420 501.700 346 466.700Z" fill="#a01212" fill-opacity=".84"/>
                        <path d="M321 204 329.300 206.700 346 466.700 339.300 470Z" fill="#841a1a" fill-opacity=".9"/>
                        <path d="M410 225.700 417.700 224 428.300 506 420 501.700Z" fill="#7c1414" fill-opacity=".94"/>
                        <path d="M321 204 329 203 417.700 224 410 225.700 329.300 206.700Z" fill="#8e1414"/>
                        <path d="M339.300 470 346 466.700 420 501.700 428.300 506 420.700 510Z" fill="#8e1414"/>
                    </g>
                    <g stroke="#5e6266" fill="none">
                        <path d="M99 591V562M99 591 120 582M99 591 123 598"/>
                    </g>
                    <g class="axis-label">
                        <text x="101" y="565">z</text><text x="121" y="584">y</text><text x="124" y="601">x</text>
                    </g>
                </svg>
            </div>

            <div class="side-panel">
                <div class="sp-line"></div>
                <div class="sp-tabs">
                    <span class="sp-tab active"><svg><use href="#wheel"/></svg>Properties</span>
                    <span class="sp-tab"><svg><use href="#rball"/></svg>Rendering</span>
                    <span class="sp-tab"><svg><use href="#tube"/></svg>Materials</span>
                    <span class="sp-tab last"><svg><use href="#lay"/></svg>Layers</span>
                    <svg class="gear"><use href="#gearf"/></svg>
                </div>
                <div class="sp-body">
                    <span class="sp-btn on"></span><span class="sp-btn ball"></span><span class="sp-btn red"></span>
                </div>
            </div>
        </div>

        <div class="vp-tabs">
            <span class="vp-tab active">Perspective</span><span class="vp-tab">Top</span><span class="vp-tab">Front</span><span class="vp-tab">Right</span><span class="vp-tab plus">&#10010;</span>
        </div>

        <div class="osnap">
            <label><i></i>End</label><label><i></i>Near</label><label><i></i>Point</label><label><i></i>Mid</label><label><i></i>Cen</label><label><i></i>Int</label><label><i></i>Perp</label><label><i></i>Tan</label><label><i></i>Quad</label><label><i></i>Knot</label><label><i></i>Vertex</label><label class="off"><i></i>Project</label>
        </div>

        <div class="cmd">
            <div class="cmd-log">
                <div>* Loading GhPython assembly...</div>
                <div>* Loading Element_MeshSamplePlus user object...</div>
            </div>
            <div class="cmd-line">Command:</div>
        </div>

        <div class="status">
            <span class="st-cplane">CPlane</span>
            <span class="st-coord">x -6.92</span>
            <span class="st-coord">y 26.95</span>
            <span class="st-coord">z 0.00</span>
            <span class="st-unit">Feet</span>
            <span class="st-layer"><i></i>Default</span>
            <b>Grid Snap</b>
        </div>
    </div>

    <div class="gh">
        <div class="gh-title">Grasshopper - unnamed</div>
        <div class="gh-menu">
            <span>File</span><span>Edit</span><span>View</span><span>Display</span><span>Solution</span><span>Help</span><span>MetaHopper</span>
        </div>
        <div class="gh-tabs">
            <span>Params</span><span>Maths</span><span>Sets</span><span>Vector</span><span>Curve</span><span>Srf</span><span>Msh</span><span>Int</span><span>Trns</span><span>Dis</span><span>Human UI</span><span>ShapeDiver</span><span>Wb</span><span>Pufferfish</span><span>jSwan</span><span>PanelingTools</span><span>Kangaroo2</span><span class="active">Revit</span><span>M</span>
        </div>

        <div class="ribbon">
            <div class="rib">
                <div class="rib-body"><div class="rib-grp c4">
                    <svg><use href="#g-tri"/></svg><svg><use href="#g-col"/></svg><svg><use href="#g-dome"/></svg><svg><use href="#g-wallb"/></svg>
                    <svg><use href="#g-str"/></svg><svg><use href="#g-sq"/></svg><svg><use href="#g-rm"/></svg>
                </div></div>
                <div class="rib-label">Build<em>+</em></div>
            </div>
            <div class="rib">
                <div class="rib-body">
                    <div class="rib-grp c2"><b>G</b><b>C</b><b>C</b><svg><use href="#g-tree"/></svg></div>
                    <i class="rib-sep"></i>
                    <div class="rib-grp c1"><svg><use href="#g-bar"/></svg><svg><use href="#g-cone"/></svg></div>
                </div>
                <div class="rib-label">Category<em>+</em></div>
            </div>
            <div class="rib">
                <div class="rib-body"><div class="rib-grp c1"><svg><use href="#g-dat"/></svg><svg><use href="#g-lev"/></svg></div></div>
                <div class="rib-label">Datu...</div>
            </div>
            <div class="rib">
                <div class="rib-body"><div class="rib-grp c3">
                    <svg><use href="#g-fgrid"/></svg><svg><use href="#g-fbox"/></svg><svg><use href="#g-doc"/></svg>
                    <svg><use href="#g-fbox"/></svg><svg><use href="#g-flvl"/></svg>
                </div></div>
                <div class="rib-label">Document<em>+</em></div>
            </div>
            <div class="rib">
                <div class="rib-body"><div class="rib-grp c4">
                    <svg><use href="#g-el"/></svg><svg><use href="#g-tag"/></svg><svg><use href="#g-arr"/></svg><svg><use href="#g-eld"/></svg>
                    <svg><use href="#g-bbox"/></svg><b>E</b><svg><use href="#g-arr"/></svg><svg><use href="#g-elsp"/></svg>
                </div></div>
                <div class="rib-label">Element<em>+</em></div>
            </div>
            <div class="rib">
                <div class="rib-body">
                    <div class="rib-grp c2"><b>T</b><b>N</b><b>L</b><b>S</b></div>
                    <i class="rib-sep wide"></i>
                    <div class="rib-grp c2"><b>B</b><b>O</b><b>C</b><b>V</b></div>
                </div>
                <div class="rib-label">Family<em>+</em></div>
            </div>
            <div class="rib">
                <div class="rib-body">
                    <div class="rib-grp c2"><b class="dim">&#8373;</b><b class="tall">V</b><b class="tall">&#923;</b><span></span></div>
                    <i class="rib-sep wide"></i>
                    <div class="rib-grp c1"><b>C</b><b>T</b></div>
                </div>
                <div class="rib-label">Filter<em>+</em></div>
            </div>
            <div class="rib">
                <div class="rib-body">
                    <div class="rib-grp c2"><svg><use href="#g-pl2"/></svg><svg><use href="#g-ln"/></svg><svg><use href="#g-sw"/></svg><svg><use href="#g-xx"/></svg></div>
                    <i class="rib-sep wide"></i>
                    <div class="rib-grp c1"><svg><use href="#g-cblue"/></svg></div>
                </div>
                <div class="rib-label">Geometry<em>+</em></div>
            </div>
            <div class="rib host">
                <div class="rib-body"><div class="rib-grp c1"><b>F</b></div></div>
                <div class="rib-label">Host</div>
            </div>
            <div class="rib">
                <div class="rib-body"><div class="rib-grp c2">
                    <svg><use href="#g-in1"/></svg><svg><use href="#g-in2"/></svg><svg><use href="#g-in3"/></svg><svg><use href="#g-in4"/></svg>
                </div></div>
                <div class="rib-label">Input<em>+</em></div>
            </div>
        </div>

        <div class="gh-tools">
            <svg class="t-folder"><use href="#folder"/></svg>
            <svg class="t-disk"><use href="#disk"/></svg>
            <i class="t-sep"></i>
            <div class="combo"><span>100%</span><svg viewBox="0 0 10 6"><path d="M1 1 5 5 9 1" fill="none" stroke="#444"/></svg></div>
            <svg class="t-fit"><use href="#fit"/></svg><i class="t-drop"></i>
            <svg class="t-eye"><use href="#eye"/></svg><i class="t-drop"></i>
            <svg class="t-pen"><use href="#pen"/></svg>
        </div>

        <div class="gh-canvas">
            <div class="gh-grid">
                <svg class="wires">
                    <path d="M324 173H376M447 173H486"/>
                    <path d="M324 173C354 173 354 140 353 115C352 92 350 66 384 66"/>
                </svg>

                <div class="gh-panel p-host">
                    <i class="grip l"></i><i class="grip r"></i>
                    <div class="p-head">{0}</div>
                    <div class="p-row"><span class="p-idx">0</span><span class="p-val">Revit Host element : Wall 1</span></div>
                </div>
                <div class="gh-panel p-brep">
                    <i class="grip l"></i><i class="grip r"></i>
                    <div class="p-head">{0;0}</div>
                    <div class="p-row"><span class="p-idx">0</span><span class="p-val">Closed Brep</span></div>
                </div>
                <div class="comp c-host">
                    <i class="grip l"></i><i class="grip r"></i>
                    <svg><use href="#c-host"/></svg>
                </div>
                <div class="comp c-geo">
                    <i class="grip l"></i><i class="grip r"></i>
                    <span class="in">E</span><svg><use href="#c-geo"/></svg><span class="out">G</span>
                </div>
            </div>
        </div>
    </div>

    <script src="grid.js"></script>
</body>
</html>
```

FILE: styles.css
```css
html, body {
    margin: 0;
    width: 1500px;
    height: 747px;
    overflow: hidden;
    background: #fff;
    font-family: "Noto Sans", "Open Sans", sans-serif;
    font-size: 11.2px;
    color: #111;
}
.defs {
    position: absolute;
}
i {
    font-style: normal;
}

/* windows on the desktop */
.bg-win {
    position: absolute;
    left: 1423px;
    top: 0;
    width: 77px;
    height: 155px;
    background: linear-gradient(#ccc 22px, #fff 23px);
}
.rhino {
    position: absolute;
    left: 0;
    top: 0;
    width: 1423px;
    height: 747px;
    display: flex;
    flex-direction: column;
    background: #e9ebef;
    border-right: 1px solid #6a6a6a;
    box-shadow: 3px 0 14px rgba(0,0,0,0.28);
}
.gh {
    position: absolute;
    left: 590px;
    top: 155px;
    width: 910px;
    height: 592px;
    box-sizing: border-box;
    display: flex;
    flex-direction: column;
    background: #f0f0f0;
    border-top: 1px solid #777;
    border-left: 1px solid #777;
    overflow: hidden;
}

/* rhino title and menu */
.title-bar {
    height: 30px;
    flex: none;
    display: flex;
    align-items: center;
    background: #4c4a48;
    color: #e6e6e6;
    font-size: 11.4px;
}
.rh-logo {
    width: 16px;
    height: 16px;
    margin: 0 5px 0 6px;
}
.win-btns {
    margin-left: auto;
    display: flex;
    gap: 35px;
    padding-right: 19px;
}
.win-btns svg {
    width: 10px;
    height: 10px;
}
.menu {
    height: 18px;
    flex: none;
    display: flex;
    align-items: center;
    gap: 13.9px;
    padding-left: 5px;
    background: #fff;
}

/* rhino toolbar */
.toolbar {
    height: 65px;
    flex: none;
    border-left: 1px solid #d6d9e0;
    margin-left: 2px;
}
.tb-tabs {
    height: 16px;
    margin-top: 6px;
    padding-left: 2px;
    display: flex;
    position: relative;
    border-bottom: 1px solid #c5d0e3;
}
.tb-tab {
    position: relative;
    z-index: 0;
    height: 16px;
    line-height: 15px;
    padding: 0 10px;
    background: #dcdcde;
    border-radius: 0 3px 0 0;
    border-top: 1px solid #c9d3e6;
    border-right: 1px solid #c9d3e6;
    box-sizing: border-box;
    color: #1a2230;
}
.tb-tab::before {
    content: "";
    position: absolute;
    z-index: -1;
    left: -7px;
    top: -1px;
    bottom: 0;
    width: 14px;
    background: inherit;
    border-top: 1px solid #c9d3e6;
    border-left: 1px solid #c9d3e6;
    border-radius: 3px 0 0 0;
    transform: skewX(-27deg);
}
.tb-tab.active {
    background: #eceef2;
    height: 17px;
    z-index: 1;
}
.gear {
    width: 15px;
    height: 15px;
    position: absolute;
    top: 0;
    right: 2px;
}
.tb-icons {
    display: flex;
    align-items: center;
    padding: 3px 0 0 3px;
    gap: 4px;
}
.tb-icons svg {
    width: 24px;
    height: 24px;
    flex: none;
}
.tb-icons svg.big {
    width: 26px;
    height: 26px;
}
.tb-sep {
    width: 1px;
    height: 26px;
    margin: 0 1px;
    background: #c8cbd2;
}

/* main area */
.rh-main {
    height: 515px;
    flex: none;
    display: flex;
}
.side-tools {
    width: 62px;
    flex: none;
    box-sizing: border-box;
    padding-top: 8px;
    display: grid;
    grid-template-columns: 27px 28px;
    grid-auto-rows: 28px;
    align-content: start;
    background: linear-gradient(#d5d9e3, #d5d9e3) 0 3px / 56px 1px no-repeat, linear-gradient(#d5d9e3, #d5d9e3) 0 5px / 56px 1px no-repeat;
}
.cell {
    position: relative;
    display: flex;
    align-items: center;
    justify-content: center;
}
.cell svg {
    width: 24px;
    height: 24px;
}
.cell.more::after {
    content: "";
    position: absolute;
    right: 1px;
    bottom: 1px;
    width: 6px;
    height: 6px;
    background: #8f8f8f;
    clip-path: polygon(100% 0, 100% 100%, 0 100%);
}
.viewport {
    width: 921px;
    flex: none;
    position: relative;
    background: #9ea5ad;
    overflow: hidden;
}
.scene {
    display: block;
    width: 921px;
    height: 515px;
}
.axis-label {
    font: 14px "Liberation Sans", sans-serif;
    fill: #5e6266;
}
.vp-label {
    position: absolute;
    left: 0;
    top: 0;
    z-index: 1;
    width: 91px;
    height: 19px;
    display: flex;
    align-items: center;
    box-sizing: border-box;
    padding-left: 8px;
    background: #a6bbd2;
    font-weight: 700;
    font-size: 11.2px;
    color: #0e1c34;
}
.vp-label i {
    flex: none;
    width: 1px;
    height: 14px;
    margin-left: 8px;
    background: #111;
}
.vp-label b {
    flex: none;
    width: 0;
    height: 0;
    margin-left: 2px;
    border: 3px solid transparent;
    border-top: 4px solid #111;
    border-bottom: 0;
}
.side-panel {
    flex: 1;
    padding: 3px 0 0 8px;
}
.sp-line {
    height: 2px;
    margin-right: 1px;
    border-top: 1px solid #c9d3e6;
    border-bottom: 1px solid #c9d3e6;
}
.sp-tabs {
    position: relative;
    display: flex;
    height: 20px;
    margin-top: 2px;
}
.sp-tabs .gear {
    top: 3px;
    right: 3px;
}
.sp-tab {
    display: flex;
    align-items: center;
    gap: 3px;
    box-sizing: border-box;
    height: 20px;
    padding: 0 12px 0 5px;
    margin-right: 1px;
    background: #dcdcde;
    color: #1a2230;
    clip-path: polygon(0 3px, 3px 0, calc(100% - 14px) 0, 100% 100%, 0 100%);
}
.sp-tab.active {
    background: #f0f1f4;
    padding: 0 9px 0 4px;
    margin-right: 3px;
    color: #111;
}
.sp-tab.last {
    padding-right: 22px;
}
.sp-tab svg {
    width: 15px;
    height: 15px;
}
.sp-body {
    height: 40px;
    margin-right: 1px;
    padding: 5px 0 0 6px;
    display: flex;
    gap: 3px;
    background: #eff0f3;
    border: 1px solid #c9d3e6;
    border-top: 0;
}
.sp-btn {
    width: 27px;
    height: 27px;
    box-sizing: border-box;
    border: 1px solid #777;
    background: #e4e4e4;
}
.sp-btn.on {
    background: radial-gradient(ellipse 8px 4px at 50% 7px, #2b2b2b 90%, transparent) #8fc4e6;
}
.sp-btn.ball {
    background: radial-gradient(circle 4px at 18px 5px, #3a5ab8 90%, transparent) #e4e4e4;
}
.sp-btn.red {
    border: 3px solid #888;
    background: linear-gradient(#7cc4ea 2px, #d43030 2px, #d43030 4px, #fff 4px);
}

/* below the viewport */
.vp-tabs {
    height: 22px;
    flex: none;
    display: flex;
    padding-left: 62px;
}
.vp-tab {
    height: 20px;
    line-height: 19px;
    padding: 0 5px 0 11px;
    background: #d7d8da;
    color: #1a2230;
    clip-path: polygon(0 0, 100% 0, 100% 12px, calc(100% - 6px) 100%, 8px 100%, 0 10px);
}
.vp-tab.active {
    background: #f8f8fa;
    padding: 0 3px 0 10px;
}
.vp-tab.plus {
    background: #eceef2;
    color: #8d96a5;
    padding: 0 14px 0 10px;
    font-size: 11px;
}
.osnap {
    height: 27px;
    flex: none;
    display: flex;
    align-items: center;
    padding-left: 7px;
    gap: 6.5px;
    font-size: 11px;
    white-space: nowrap;
}
.osnap label {
    display: flex;
    align-items: center;
    gap: 4px;
}
.osnap i {
    width: 11px;
    height: 11px;
    background: #fff;
    border: 1px solid #333;
}
.osnap .off {
    color: #444;
    margin-left: 4px;
}
.osnap .off i {
    background: #e4e4e4;
    border-color: #aaa;
}
.cmd {
    height: 50px;
    flex: none;
    margin-left: 5px;
    background: #fff;
    line-height: 15px;
}
.cmd-log {
    height: 30px;
    padding-left: 4px;
    border-bottom: 1px solid #c9d3e6;
}
.cmd-line {
    padding: 1px 0 0 1px;
    font-weight: 700;
}
.status {
    height: 19px;
    margin-top: 1px;
    flex: none;
    display: flex;
    align-items: center;
    border-top: 1px solid #c9d3e6;
    white-space: nowrap;
}
.status span, .status b {
    box-sizing: border-box;
    height: 19px;
    line-height: 21px;
    border-right: 1px solid #c9d3e6;
    text-align: center;
}
.st-cplane {
    width: 47px;
}
.st-coord {
    width: 88px;
}
.st-unit {
    width: 89px;
}
.st-layer {
    display: flex;
    align-items: center;
    gap: 3px;
    width: 173px;
    padding-left: 3px;
    border-right: 0 !important;
}
.st-layer i {
    width: 13px;
    height: 13px;
    background: #000;
}
.status b {
    border: 0;
}

/* grasshopper chrome */
.gh-title {
    height: 30px;
    flex: none;
    line-height: 30px;
    padding-left: 7px;
    background: #fff;
    color: #8a8a8a;
}
.gh-menu {
    height: 26px;
    flex: none;
    display: flex;
    align-items: center;
    gap: 18.8px;
    padding-left: 12px;
    font-size: 11.4px;
}
.gh-tabs {
    height: 25px;
    flex: none;
    display: flex;
    align-items: center;
    gap: 16.5px;
    padding-left: 7px;
    font-size: 10.8px;
    color: #6e7c86;
    white-space: nowrap;
}
.gh-tabs .active {
    height: 22px;
    line-height: 21px;
    padding: 0 7px;
    margin: 0 -8px 0 -7px;
    background: #fff;
    border: 1px solid #aaa;
    border-bottom: 0;
    border-radius: 6px 6px 0 0;
    color: #111;
}
.ribbon {
    height: 85px;
    flex: none;
    display: flex;
    align-items: flex-start;
    gap: 3.8px;
    padding: 1px 0 0 2px;
    box-sizing: border-box;
}
.rib {
    flex: none;
    height: 73px;
    display: flex;
    flex-direction: column;
    box-sizing: border-box;
    border: 1px solid #a8a8a8;
    border-radius: 5px;
    background: linear-gradient(#f3f3f3, #d8d8d8);
    overflow: hidden;
}
.rib.host {
    height: 45px;
}
.rib-body {
    flex: 1;
    display: flex;
    padding: 0 1px;
}
.rib-grp {
    display: grid;
    grid-auto-rows: 28px;
    padding-top: 1px;
}
.c1 {
    grid-template-columns: 28px;
}
.c2 {
    grid-template-columns: repeat(2, 28px);
}
.c3 {
    grid-template-columns: repeat(3, 28px);
}
.c4 {
    grid-template-columns: repeat(4, 28px);
}
.rib-grp svg {
    width: 24px;
    height: 24px;
    margin: 2px;
}
.rib-grp b {
    width: 24px;
    height: 24px;
    margin: 1px 2px 3px;
    box-sizing: border-box;
    border: 1px solid #222;
    border-radius: 6px;
    background: linear-gradient(#f6f6f6, #d4d4d4);
    font: 17px/22px "Noto Sans", sans-serif;
    text-align: center;
    color: #222;
}
.rib-grp b.dim {
    color: #777;
}
.rib-grp b.tall {
    font-size: 21px;
    line-height: 21px;
}
.rib-sep {
    width: 1px;
    margin: 3px 4px;
    background: #c2c2c2;
}
.rib-sep.wide {
    margin: 3px 5px;
}
.rib-label {
    height: 13px;
    flex: none;
    position: relative;
    width: 0;
    min-width: 100%;
    background: linear-gradient(#111, #3a3a3a);
    color: #f2f2f2;
    text-align: center;
    line-height: 13px;
    font-size: 10.3px;
    white-space: nowrap;
}
.rib-label em {
    position: absolute;
    right: 2px;
    top: 0;
    font-style: normal;
    font-weight: 700;
    font-size: 12px;
    color: #aaa;
}
.gt {
    font: 7px "Liberation Sans", sans-serif;
    fill: #111;
}
.gh-tools {
    height: 33px;
    flex: none;
    box-sizing: border-box;
    display: flex;
    align-items: center;
    padding-left: 5px;
    border-top: 2px solid #8b8b8b;
    background: linear-gradient(#fff, #f2f2f2);
}
.gh-tools svg {
    flex: none;
}
.t-folder {
    width: 22px;
    height: 22px;
}
.t-disk {
    width: 22px;
    height: 22px;
    margin-left: 8px;
}
.t-sep {
    width: 1px;
    height: 22px;
    margin: 0 4px 0 7px;
    background: #ccc;
}
.combo {
    width: 136px;
    height: 23px;
    box-sizing: border-box;
    display: flex;
    align-items: center;
    justify-content: space-between;
    padding: 0 6px 0 3px;
    border: 1px solid #8a8a8a;
    background: #fff;
    font-size: 11.6px;
}
.combo svg {
    width: 10px;
    height: 6px;
}
.t-fit {
    width: 22px;
    height: 22px;
    margin-left: 6px;
}
.t-drop {
    width: 0;
    height: 0;
    margin: 0 8px 0 6px;
    border: 3px solid transparent;
    border-top: 3px solid #111;
    border-bottom: 0;
}
.t-eye {
    width: 24px;
    height: 16px;
    margin-left: -1px;
}
.t-eye + .t-drop {
    margin: 0 6px 0 6px;
}
.t-pen {
    width: 23px;
    height: 23px;
}

/* grasshopper canvas */
.gh-canvas {
    flex: 1;
    min-height: 0;
    display: flex;
    padding: 10px 0 0 12px;
    box-sizing: border-box;
    background: repeating-linear-gradient(45deg, #9b9890 0 1px, #8b8880 1px 2px);
}
.gh-grid {
    flex: 1;
    position: relative;
    background-color: #d4d0c8;
    background-image: linear-gradient(#bcb8b0 1px, transparent 1px), linear-gradient(90deg, #bcb8b0 1px, transparent 1px);
    background-size: 150px 50px;
}
.wires {
    position: absolute;
    left: 0;
    top: 0;
    width: 897px;
    height: 382px;
    fill: none;
    stroke: #5c5a56;
    stroke-width: 3;
}
.gh-panel, .comp {
    position: absolute;
    box-sizing: border-box;
    border: 1px solid #111;
}
.gh-panel {
    width: 318px;
    height: 83px;
    border-radius: 3px;
    background: #fff linear-gradient(90deg, #fff 13px, #d8d8d8 13px, #d8d8d8 14px, #fff 14px);
    font: 11px/14px "Liberation Mono", monospace;
    color: #1c3a1c;
}
.p-host {
    left: 387px;
    top: 25px;
}
.p-brep {
    left: 488px;
    top: 132px;
}
.p-head {
    height: 18px;
    line-height: 20px;
    margin: 0 1px;
    padding-right: 11px;
    border-radius: 2px 2px 0 0;
    background: #d6d6d6;
    text-align: right;
    color: #445;
}
.p-row {
    display: flex;
    padding-top: 3px;
}
.p-idx {
    width: 15px;
    text-indent: 4px;
}
.comp {
    display: flex;
    align-items: center;
    justify-content: center;
    border-radius: 4px;
    border-color: #3a3a3a;
    background: linear-gradient(#ebebe8, #bdbdba);
}
.c-host {
    left: 271px;
    top: 161px;
    width: 51px;
    height: 25px;
}
.c-host svg {
    width: 24px;
    height: 24px;
}
.c-geo {
    left: 378px;
    top: 159px;
    width: 66px;
    height: 29px;
}
.c-geo svg {
    width: 24px;
    height: 26px;
    margin: 0 5px 0 5px;
}
.comp .in {
    color: #3a1010;
}
.grip {
    position: absolute;
    top: 50%;
    width: 8px;
    height: 8px;
    margin-top: -4px;
    box-sizing: border-box;
    border: 2px solid #111;
    border-radius: 50%;
    background: #fff;
}
.grip.l {
    left: -5px;
    clip-path: inset(-1px 3px -1px -1px);
}
.grip.r {
    right: -5px;
    clip-path: inset(-1px -1px -1px 3px);
}
.gh-panel .grip {
    top: 41px;
}
```

FILE: grid.js
```js
// ground plane grid of the perspective viewport
const ORIGIN = [220, 500];
const VANISH_GREEN = [1599, -63];
const VANISH_RED = [-858, -122];
const STEP_GREEN = 0.0885;
const STEP_RED = 0.0715;
const CELLS = 5;
const MINOR = 5;

function project(u, w) {
    const a = STEP_GREEN * u;
    const b = STEP_RED * w;
    const d = 1 + a + b;
    return [
        (ORIGIN[0] + a * VANISH_GREEN[0] + b * VANISH_RED[0]) / d,
        (ORIGIN[1] + a * VANISH_GREEN[1] + b * VANISH_RED[1]) / d
    ];
}

function addLine(parent, from, to, color) {
    const line = document.createElementNS('http://www.w3.org/2000/svg', 'line');
    line.setAttribute('x1', from[0]);
    line.setAttribute('y1', from[1]);
    line.setAttribute('x2', to[0]);
    line.setAttribute('y2', to[1]);
    line.setAttribute('stroke', color);
    line.setAttribute('stroke-width', '1');
    parent.appendChild(line);
}

const grid = document.getElementById('grid');
for (const major of [false, true]) {
    for (let i = -CELLS * MINOR; i <= CELLS * MINOR; i++) {
        const isMajor = i % MINOR === 0;
        if (isMajor !== major) continue;
        const color = major ? '#7f8387' : '#929aa3';
        addLine(grid, project(i / MINOR, -CELLS), project(i / MINOR, CELLS), color);
        addLine(grid, project(-CELLS, i / MINOR), project(CELLS, i / MINOR), color);
    }
}
```
